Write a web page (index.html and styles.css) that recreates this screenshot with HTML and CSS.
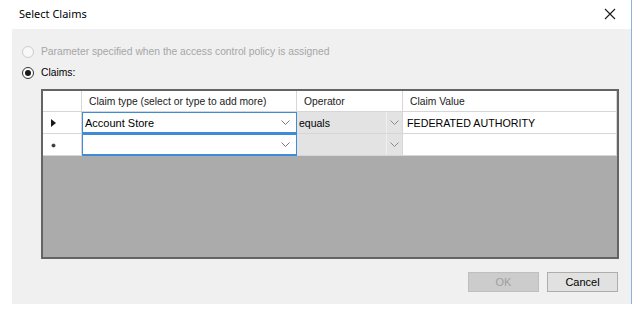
FILE: index.html
```html
<!DOCTYPE html>
<html lang="en">
<head>
    <meta charset="UTF-8">
    <title>Select Claims</title>
    <link rel="stylesheet" href="styles.css">
</head>
<body>
    <div class="window">
        <div class="titlebar">
            <span class="title">Select Claims</span>
            <svg class="close" width="12" height="12" viewBox="0 0 12 12">
                <path d="M1 1 L11 11 M11 1 L1 11" stroke="#1a1a1a" stroke-width="1.1" fill="none"/>
            </svg>
        </div>
        <div class="panel">
            <div class="option disabled">
                <span class="radio"></span>
                <span>Parameter specified when the access control policy is assigned</span>
            </div>
            <div class="option">
                <span class="radio checked"></span>
                <span>Claims:</span>
            </div>

            <div class="grid">
                <div class="cell rowhead"></div>
                <div class="cell head">Claim type (select or type to add more)</div>
                <div class="cell head">Operator</div>
                <div class="cell head">Claim Value</div>

                <div class="cell rowhead"><span class="arrow"></span></div>
                <div class="cell combo active">
                    <span class="combo-text">Account Store</span>
                    <svg class="chev" width="9" height="5" viewBox="0 0 9 5"><path d="M0.5 0.5 L4.5 4.5 L8.5 0.5" stroke="#7a7a7a" fill="none"/></svg>
                </div>
                <div class="cell combo readonly">
                    <span class="combo-text">equals</span>
                    <span class="combo-btn"><svg class="chev" width="9" height="5" viewBox="0 0 9 5"><path d="M0.5 0.5 L4.5 4.5 L8.5 0.5" stroke="#8a8a8a" fill="none"/></svg></span>
                </div>
                <div class="cell value">FEDERATED AUTHORITY</div>

                <div class="cell rowhead"><span class="dot"></span></div>
                <div class="cell combo active">
                    <span class="combo-text"></span>
                    <svg class="chev" width="9" height="5" viewBox="0 0 9 5"><path d="M0.5 0.5 L4.5 4.5 L8.5 0.5" stroke="#7a7a7a" fill="none"/></svg>
                </div>
                <div class="cell combo readonly">
                    <span class="combo-text"></span>
                    <span class="combo-btn"><svg class="chev" width="9" height="5" viewBox="0 0 9 5"><path d="M0.5 0.5 L4.5 4.5 L8.5 0.5" stroke="#8a8a8a" fill="none"/></svg></span>
                </div>
                <div class="cell value"></div>
            </div>

            <div class="buttons">
                <button class="btn" disabled>OK</button>
                <button class="btn">Cancel</button>
            </div>
        </div>
    </div>
</body>
</html>
```

FILE: styles.css
```css
* {
    box-sizing: border-box;
}
body {
    margin: 0;
    background-color: #fff;
    font-family: 'Liberation Sans', Arial, sans-serif;
    font-size: 11px;
    color: #000;
}
.window {
    width: 632px;
    height: 304px;
    border-right: 1px solid #8db2e0;
}
.titlebar {
    height: 29px;
    display: flex;
    align-items: center;
    justify-content: space-between;
    padding: 0 15px 0 19px;
}
.title {
    font-family: 'Noto Sans', sans-serif;
    font-size: 11px;
    color: #000;
    margin-top: -2px;
}
.close {
    margin-top: -1px;
}
.panel {
    margin-left: 12px;
    height: 275px;
    background-color: #f0f0f0;
    padding: 12px 13px 0 10px;
}
.option {
    display: flex;
    align-items: center;
    gap: 7px;
    height: 21px;
    font-size: 10.3px;
}
.option.disabled {
    color: #a6a6a6;
}
.radio {
    width: 12px;
    height: 12px;
    border-radius: 50%;
    border: 1px solid #333;
    background-color: #fff;
    display: flex;
    align-items: center;
    justify-content: center;
}
.option.disabled .radio {
    border-color: #cccccc;
    background-color: #f8f8f8;
}
.radio.checked::after {
    content: "";
    width: 6px;
    height: 6px;
    border-radius: 50%;
    background-color: #1a1a1a;
}
.grid {
    margin: 6px 0 0 19px;
    width: 578px;
    height: 170px;
    border: 2px solid #646464;
    background-color: #ababab;
    display: grid;
    grid-template-columns: 39px 215px 106px 214px;
    grid-template-rows: 21px 22px 22px;
}
.cell {
    background-color: #fff;
    border-right: 1px solid #d6d6d6;
    border-bottom: 1px solid #d6d6d6;
    display: flex;
    align-items: center;
    white-space: nowrap;
    overflow: hidden;
}
.head {
    padding-left: 7px;
    color: #1a1a1a;
    font-size: 10.3px;
}
.rowhead {
    justify-content: flex-start;
    padding-left: 8px;
}
.arrow {
    width: 0;
    height: 0;
    border-top: 4px solid transparent;
    border-bottom: 4px solid transparent;
    border-left: 5px solid #1a1a1a;
}
.dot {
    width: 3px;
    height: 3px;
    border-radius: 50%;
    background-color: #333;
    margin-left: 1px;
    margin-top: 2px;
    box-shadow: 0 0 0 0.6px #777;
}
.combo {
    justify-content: space-between;
}
.combo.active {
    border: 1px solid #3f8bd6;
    border-bottom-width: 2px;
    padding: 0 6px 0 2px;
}
.combo.readonly {
    background-color: #e3e3e3;
    padding-left: 2px;
    font-size: 10.5px;
}
.combo-text {
    flex: 1;
}
.combo-btn {
    width: 16px;
    height: 100%;
    border-left: 1px solid #f0f0f0;
    display: flex;
    align-items: center;
    justify-content: center;
}
.value {
    padding-left: 4px;
    font-size: 10.7px;
}
.buttons {
    display: flex;
    justify-content: flex-end;
    gap: 8px;
    margin-top: 13px;
}
.btn {
    width: 71px;
    height: 20px;
    font-family: 'Liberation Sans', Arial, sans-serif;
    font-size: 11px;
    color: #000;
    background-color: #e1e1e1;
    border: 1px solid #adadad;
    padding: 0;
}
.btn:disabled {
    background-color: #cccccc;
    border-color: #bfbfbf;
    color: #a0a0a0;
}
```
